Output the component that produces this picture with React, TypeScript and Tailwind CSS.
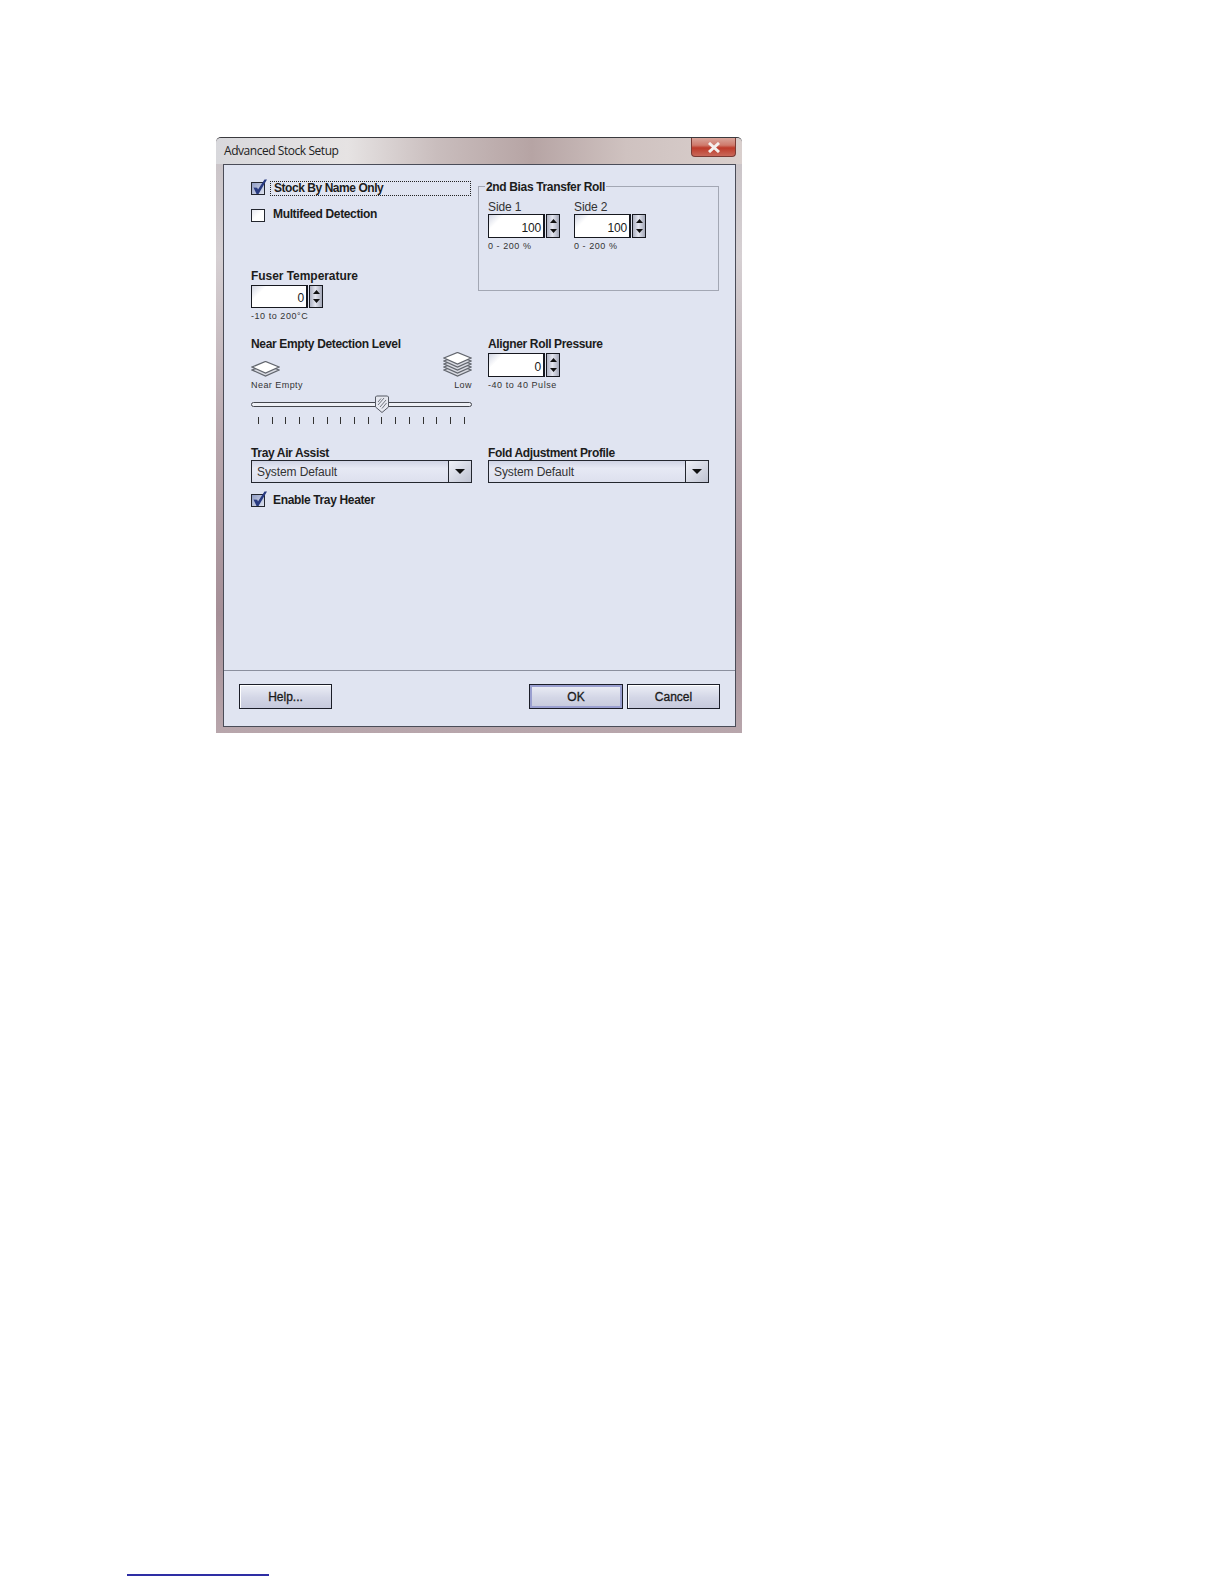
import React from "react";

function Check({ checked }: { checked?: boolean }) {
  return (
    <span className={`block w-[14px] h-[13px] shrink-0 border border-[#23262e] ${checked ? "bg-[linear-gradient(135deg,#8f9cc4,#dfe3ef)]" : "bg-[linear-gradient(135deg,#e6e8f0,#ffffff_50%)]"}`}>
      {checked && (
        <svg width="14" height="13" viewBox="0 0 14 13" className="overflow-visible">
          <path d="M1.5 4.5 L5.2 4.8 L6 6.5 L12.5 -3.5 L15 -3.5 L6.5 11 L4.5 11 Z" fill="#283a80" />
        </svg>
      )}
    </span>
  );
}

function Spinner({ value, range, wide }: { value: string; range: string; wide?: boolean }) {
  return (
    <div>
      <div className={`flex gap-[1px] ${wide ? "h-[24px]" : "h-[23px]"}`}>
        <div className="w-[57px] border border-[#16181f] border-r-2 bg-[linear-gradient(135deg,#d3d7e4,#ffffff_20%)] pr-[2px] pt-[3px] flex items-center justify-end text-[12px] tracking-[-0.2px] text-[#1a1a1a]">
          {value}
        </div>
        <div className="w-[14px] border border-[#16181f] bg-[linear-gradient(90deg,#aeb2c2,#e4e6f0_45%,#a4a8b8)] flex flex-col items-center justify-between py-[4px]">
          <svg width="7" height="4" viewBox="0 0 7 4"><path d="M3.5 0 L7 4 H0 Z" fill="#111" /></svg>
          <svg width="7" height="4" viewBox="0 0 7 4"><path d="M0 0 H7 L3.5 4 Z" fill="#111" /></svg>
        </div>
      </div>
      <div className="mt-[3px] h-[10px] leading-[10px] text-[9px] tracking-[0.55px] text-[#333]">{range}</div>
    </div>
  );
}

function Select({ w }: { w: string }) {
  return (
    <div className={`${w} h-[23px] flex border border-[#23262e] bg-[linear-gradient(180deg,#cfd3e4,#e6e9f4_35%,#dde0ee)]`}>
      <div className="flex-1 pl-[5px] leading-[22px] text-[12px] tracking-[-0.1px] text-[#333]">System Default</div>
      <div className="w-[23px] border-l border-[#23262e] bg-[linear-gradient(135deg,#eef0f7,#bfc3d2)] flex items-center justify-center">
        <svg width="10" height="5" viewBox="0 0 10 5"><path d="M0 0 H10 L5 5 Z" fill="#111" /></svg>
      </div>
    </div>
  );
}

function Btn({ label, def, w }: { label: string; def?: boolean; w: string }) {
  return (
    <button className={`${w} h-[25px] border border-[#1b1d28] bg-[linear-gradient(180deg,#eceef6,#d3d6e6_55%,#c6c9dc)] text-[12px] font-normal [-webkit-text-stroke:0.3px_#1a1a1a] text-[#1a1a1a] ${def ? "shadow-[inset_0_0_0_2px_#9a9fd0]" : "shadow-[inset_1px_1px_0_#ffffff]"}`}>
      {label}
    </button>
  );
}

function Stack({ layers }: { layers: number }) {
  const ys = Array.from({ length: layers }, (_, i) => i);
  const h = 15 + (layers - 1) * 3;
  return (
    <svg width="29" height={h + 1} viewBox={`0 0 29 ${h + 1}`} className="block">
      {ys.slice().reverse().map((i) => (
        <path key={i} d={`M14.5 ${i * 3 + 0.5} L28 ${i * 3 + 6} L14.5 ${i * 3 + 12} L1 ${i * 3 + 6} Z`} fill={i === 0 ? "#ffffff" : "#d8dae2"} stroke="#62666e" strokeWidth="1.3" />
      ))}
    </svg>
  );
}

const bold = "text-[12px] font-bold h-[14px] leading-[14px] text-[#1c1c1c] whitespace-nowrap";
const tight = "tracking-[-0.35px]";

export default function App() {
  const ticks = Array.from({ length: 16 }, (_, i) => i);
  return (
    <div className="relative w-[1224px] h-[1584px] bg-white pt-[137px] overflow-hidden font-['Liberation_Sans',Arial,sans-serif]">
      <div className="ml-[216px] w-[526px] h-[596px] flex flex-col rounded-t-[5px] border-t border-[#3a3a3e] bg-[linear-gradient(180deg,#c8c2c6_0%,#d6d0d3_20%,#b9a8ae_50%,#a58f97_80%,#b8a6ac_100%)]">
        <div className="h-[26px] shrink-0 flex justify-between rounded-t-[5px] bg-[linear-gradient(90deg,#d8d8dc_0%,#e6e3e3_25%,#c9bdbd_42%,#b6a4a4_60%,#cfc2c0_78%,#d9cfcd_100%)] pl-[8px] pr-[6px]">
          <div className="mt-[5px] h-[16px] leading-[16px] text-[12px] font-['Open_Sans',sans-serif] tracking-[-0.45px] text-[#222]">Advanced Stock Setup</div>
          <div className="w-[45px] h-[19px] rounded-b-[4px] border border-t-0 border-[#7a3a34] bg-[linear-gradient(180deg,#d9a49a_0%,#cf7a6c_40%,#bd3a2a_55%,#c9685a_100%)] flex items-center justify-center">
            <svg width="14" height="11" viewBox="0 0 14 11"><path d="M2 1 L12 10 M12 1 L2 10" stroke="#f4f0ee" strokeWidth="3" /></svg>
          </div>
        </div>

        <div className="ml-[7px] w-[513px] h-[563px] flex flex-col border border-[#4a4c58] bg-[#e0e4f1]">
          <div className="flex-1 pl-[27px] pt-[16px]">
            <div className="grid grid-cols-[221px_241px] gap-x-[6px]">
              <div className="h-[156px]">
                <div className="flex items-center h-[15px]">
                  <Check checked />
                  <div className="ml-[5px] w-[201px] h-[15px] border border-dotted border-[#222] pl-[3px] text-[12px] font-bold leading-[12px] tracking-[-0.45px] text-[#1c1c1c] whitespace-nowrap">Stock By Name Only</div>
                </div>
                <div className="flex items-center h-[14px] mt-[12px]">
                  <Check />
                  <div className={`ml-[8px] mt-[-2px] ${bold} ${tight}`}>Multifeed Detection</div>
                </div>
                <div className={`${bold} mt-[47px] tracking-[-0.05px]`}>Fuser Temperature</div>
                <div className="mt-[2px]">
                  <Spinner value="0" range="-10 to 200°C" />
                </div>
              </div>

              <div className="relative mt-[5px] w-[241px] h-[105px] border border-[#a3a7b4] pl-[9px] pt-[13px] self-start">
                <div className={`${bold} ${tight} absolute left-[6px] top-[-7px] bg-[#e0e4f1] pl-[1px] pr-[1px]`}>2nd Bias Transfer Roll</div>
                <div className="flex gap-[14px]">
                  <div>
                    <div className="h-[14px] leading-[14px] text-[12px] tracking-[-0.1px] text-[#333]">Side 1</div>
                    <Spinner value="100" range="0 - 200 %" wide />
                  </div>
                  <div>
                    <div className="h-[14px] leading-[14px] text-[12px] tracking-[-0.1px] text-[#333]">Side 2</div>
                    <Spinner value="100" range="0 - 200 %" wide />
                  </div>
                </div>
              </div>

              <div className="h-[108px]">
                <div className={`${bold} ${tight}`}>Near Empty Detection Level</div>
                <div className="flex justify-between items-end h-[26px] mt-[3px]">
                  <Stack layers={2} />
                  <Stack layers={5} />
                </div>
                <div className="flex justify-between h-[11px] leading-[11px] text-[9px] tracking-[0.45px] text-[#333]">
                  <span>Near Empty</span>
                  <span>Low</span>
                </div>
                <div className="relative mt-[11px] h-[5px] rounded-full border border-[#44464e] bg-[#eef0f6]">
                  <svg width="14" height="18" viewBox="0 0 14 18" className="absolute left-[123px] top-[-8px]">
                    <path d="M1.5 1 H12.5 L13.5 2 V12 L7 17.5 L0.5 12 V2 Z" fill="#e6e8f0" stroke="#555963" />
                    <path d="M3 10 L9 3 M5 12 L11 5 M7 13.5 L11.5 8 M3 7 L6 3.5" stroke="#70747e" strokeWidth="1" />
                  </svg>
                </div>
                <div className="flex justify-between px-[7px] mt-[10px] h-[7px]">
                  {ticks.map((t) => (
                    <span key={t} className="w-[1px] h-[7px] bg-[#333]" />
                  ))}
                </div>
              </div>

              <div className="h-[108px] pl-[10px]">
                <div className={`${bold} ${tight}`}>Aligner Roll Pressure</div>
                <div className="mt-[2px]">
                  <Spinner value="0" range="-40 to 40 Pulse" wide />
                </div>
              </div>

              <div>
                <div className={`${bold} ${tight} mt-[1px]`}>Tray Air Assist</div>
                <Select w="w-[221px]" />
                <div className="flex items-center h-[13px] mt-[11px]">
                  <Check checked />
                  <div className={`ml-[8px] mt-[-1px] ${bold} ${tight}`}>Enable Tray Heater</div>
                </div>
              </div>

              <div className="pl-[10px]">
                <div className={`${bold} ${tight} mt-[1px]`}>Fold Adjustment Profile</div>
                <Select w="w-[221px]" />
              </div>
            </div>
          </div>

          <div className="h-[56px] shrink-0 border-t border-[#8b8f9e] flex justify-between pl-[15px] pr-[15px] pt-[13px]">
            <Btn label="Help..." w="w-[93px]" />
            <div className="flex gap-[4px]">
              <Btn label="OK" def w="w-[94px]" />
              <Btn label="Cancel" w="w-[93px]" />
            </div>
          </div>
        </div>
      </div>

      <div className="ml-[127px] mt-[841px] w-[142px] h-[2px] bg-[#2e2ea4]" />
    </div>
  );
}
